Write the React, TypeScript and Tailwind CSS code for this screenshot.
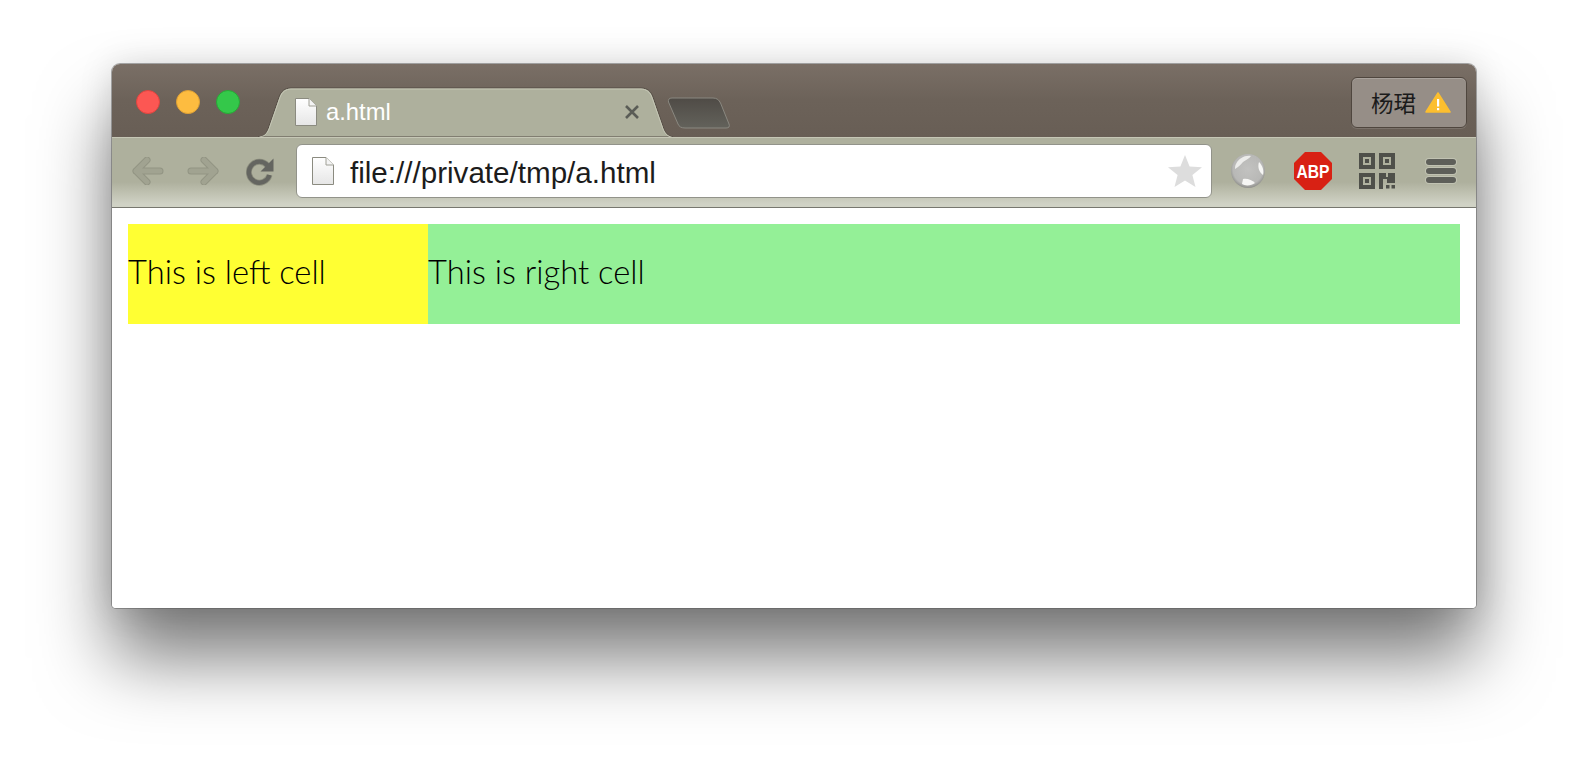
import React from "react";

function FileIcon({ w, h }: { w: number; h: number }) {
  return (
    <svg width={w} height={h} viewBox="0 0 22 28" className="shrink-0">
      <defs>
        <linearGradient id="fg" x1="0" y1="0" x2="0" y2="1">
          <stop offset="0" stopColor="#ffffff" />
          <stop offset="1" stopColor="#e6e6e6" />
        </linearGradient>
      </defs>
      <path d="M0.5 0.5H14L21.5 8V27.5H0.5Z" fill="url(#fg)" stroke="#8b8b80" />
      <path d="M14 0.5V8H21.5" fill="#f4f4f4" stroke="#a0a096" />
    </svg>
  );
}

function Arrow({ flip }: { flip?: boolean }) {
  return (
    <svg width="32" height="28" viewBox="0 0 32 28" className={flip ? "-scale-x-100" : ""}>
      <path d="M15 3L4 14L15 25M4 14H28" fill="none" stroke="#929483" strokeWidth="7" strokeLinecap="round" strokeLinejoin="round" />
      <path d="M15 3L4 14L15 25M4 14H28" fill="none" stroke="#a1a391" strokeWidth="5" strokeLinecap="round" strokeLinejoin="round" />
    </svg>
  );
}

function Reload() {
  return (
    <svg width="28" height="30" viewBox="0 0 28 30">
      <path d="M21.5 9.5A10.5 10.5 0 1 0 23.5 19" fill="none" stroke="#8c8e7e" strokeWidth="6" />
      <path d="M21.5 9.5A10.5 10.5 0 1 0 23.5 19" fill="none" stroke="#646560" strokeWidth="4.4" />
      <path d="M27.5 2.5V15.5H14.5Z" fill="#646560" />
    </svg>
  );
}

function Star() {
  return (
    <svg width="36" height="34" viewBox="0 0 36 34">
      <path d="M18 1L22.6 12.4L35 13.2L25.4 21.1L28.5 33L18 26.4L7.5 33L10.6 21.1L1 13.2L13.4 12.4Z" fill="#dddddd" />
    </svg>
  );
}

function Globe() {
  return (
    <svg width="36" height="36" viewBox="0 0 36 36">
      <defs>
        <radialGradient id="gl" cx="0.5" cy="0.45" r="0.55">
          <stop offset="0" stopColor="#c2c2c0" />
          <stop offset="0.8" stopColor="#b8b8b6" />
          <stop offset="1" stopColor="#8e8e8a" />
        </radialGradient>
      </defs>
      <circle cx="18" cy="18" r="17" fill="url(#gl)" />
      <path d="M6 11C9 5 15 2 21 3C20 5 16 7 13 9C11 11 9 14 5 16C5 14 5 13 6 11Z" fill="#ececea" />
      <path d="M29 9C33 13 34 18 33 22C30 20 27 15 29 9Z" fill="#f6f6f4" />
      <path d="M13 26C17 25 22 27 25 30C21 33 15 33 12 31Z" fill="#f6f6f4" />
    </svg>
  );
}

function Abp() {
  return (
    <svg width="40" height="40" viewBox="0 0 40 40">
      <path d="M12 1H28L39 12V28L28 39H12L1 28V12Z" fill="#d82114" />
      <text x="20" y="26.5" textAnchor="middle" fontFamily="'Liberation Sans', sans-serif" fontWeight="700" fontSize="17.5" fill="#ffffff" textLength="33" lengthAdjust="spacingAndGlyphs">ABP</text>
    </svg>
  );
}

function Qr() {
  const c = "#4f504a";
  const Finder = ({ x, y }: { x: number; y: number }) => (
    <g>
      <rect x={x + 2} y={y + 2} width="12" height="12" fill="none" stroke={c} strokeWidth="4" />
      <rect x={x + 6} y={y + 6} width="4" height="4" fill={c} />
    </g>
  );
  return (
    <svg width="36" height="36" viewBox="0 0 36 36">
      <Finder x={0} y={0} />
      <Finder x={20} y={0} />
      <Finder x={0} y={20} />
      <path d="M20 20H27V24H29V20H36V30H28V26H24V36H20Z" fill={c} />
      <rect x="27" y="32" width="3.5" height="3.5" fill={c} />
      <rect x="32.5" y="32" width="3.5" height="3.5" fill={c} />
    </svg>
  );
}

function Warning() {
  return (
    <svg width="26" height="21" viewBox="0 0 26 21">
      <path d="M13 1L25 20H1Z" fill="#fcbf2f" stroke="#fcbf2f" strokeWidth="1.5" strokeLinejoin="round" />
      <rect x="12" y="7" width="2.2" height="7.5" fill="#ffffff" />
      <rect x="12" y="16" width="2.2" height="2.2" fill="#ffffff" />
    </svg>
  );
}

function Dot({ fill, border }: { fill: string; border: string }) {
  return <span className="block w-6 h-6 rounded-full border" style={{ backgroundColor: fill, borderColor: border }} />;
}

export default function App() {
  return (
    <div className="w-[1588px] h-[768px] overflow-hidden bg-white pt-[64px] pl-[112px]" style={{ fontFamily: "'Liberation Sans', sans-serif" }}>
      <div className="w-[1364px] h-[544px] flex flex-col rounded-t-[8px] rounded-b-[4px] bg-white shadow-[0_0_0_1px_rgba(90,90,90,0.5),0_50px_72px_rgba(0,0,0,0.52),0_0_34px_rgba(0,0,0,0.13)]">
        {/* Title bar */}
        <div className="h-[73px] flex items-end rounded-t-[8px] bg-gradient-to-b from-[#7a6f66] via-[#6c6259] to-[#685e55] relative shrink-0">
          <div className="flex gap-4 pl-6 self-start pt-[26px] w-[146px] shrink-0">
            <Dot fill="#fc5753" border="#e0443e" />
            <Dot fill="#fdbc40" border="#dea034" />
            <Dot fill="#34c84a" border="#27aa35" />
          </div>
          <div className="relative w-[415px] h-[50px] shrink-0 flex items-start pl-[37px] pt-[11px]">
            <svg className="absolute inset-0" width="415" height="50" viewBox="0 0 415 50">
              <path d="M0 50C5 50 8 47 10 42L21 10C23 4 27 1 33 1H383C389 1 393 4 395 10L406 42C408 47 411 49 415 50Z" fill="#aeb09d" stroke="#554d45" strokeWidth="1" />
              <path d="M1.5 50C6 49.5 9 47 11 42L22 10.5C24 5 28 2 33 2H383C388 2 392 5 394 10.5L405 42C407 47 410 49.5 413.5 50" fill="none" stroke="#c6c7b6" strokeWidth="1" />
            </svg>
            <div className="relative flex items-center gap-[9px]">
              <FileIcon w={22} h={28} />
              <span className="text-[23.8px] leading-[28px] text-white">a.html</span>
            </div>
            <div className="absolute left-[365px] top-[16px] w-[18px] h-[18px]">
              <svg width="18" height="18" viewBox="0 0 18 18">
                <path d="M3 3L15 15M15 3L3 15" stroke="#5a5c56" strokeWidth="2.6" />
              </svg>
            </div>
          </div>
          <div className="self-start mt-[33px] -ml-[6px]">
            <svg width="64" height="32" viewBox="0 0 64 32">
              <defs>
                <linearGradient id="nt" x1="0" y1="0" x2="0" y2="1">
                  <stop offset="0" stopColor="#4f4b46" />
                  <stop offset="1" stopColor="#63625b" />
                </linearGradient>
              </defs>
              <path d="M1.5 5C1 2.5 2 1 5 1H46C50 1 52 3 53.5 6L62 27C63 29.5 62 31 59 31H18C14 31 12 29.5 11 27Z" fill="url(#nt)" stroke="#8a8880" strokeWidth="1" />
            </svg>
          </div>
          <div className="ml-auto mr-[9px] self-start mt-[13px] w-[116px] h-[51px] rounded-[6px] bg-[#968e87] border border-[#4f463e] shadow-[inset_0_1px_0_rgba(255,255,255,0.18),0_1px_0_rgba(255,255,255,0.12)] flex items-center pl-[19px] gap-[9px]">
            <span className="text-[22.5px] leading-none text-[#1b1b1b] whitespace-nowrap" style={{ fontFamily: "'Noto Sans CJK SC', sans-serif" }}>杨珺</span>
            <Warning />
          </div>
        </div>
        {/* Toolbar */}
        <div className="h-[71px] flex items-start bg-[linear-gradient(to_bottom,#aeb09d_0,#aeb09d_44px,#d0d2c5_66px,#d0d2c5_71px)] border-t border-[#c6c7b6] border-b border-b-[#77776f] shrink-0 relative">
          <div className="flex items-center mt-[18px] ml-[20px] w-[164px] shrink-0">
            <Arrow />
            <span className="w-[23px]" />
            <Arrow flip />
            <span className="w-[27px]" />
            <Reload />
          </div>
          <div className="mt-[6px] w-[916px] h-[54px] rounded-[6px] bg-white border border-[#92938a] flex items-center pl-[15px] pr-[8px] shrink-0">
            <FileIcon w={22} h={30} />
            <span className="ml-[16px] mt-[3px] text-[29.6px] leading-none text-[#1c1c1c] whitespace-nowrap">file:///private/tmp/a.html</span>
            <span className="ml-auto flex"><Star /></span>
          </div>
          <div className="flex items-center mt-[13px] ml-[18px]">
            <Globe />
            <span className="w-[27px]" />
            <Abp />
            <span className="w-[26px]" />
            <Qr />
            <span className="w-[31px]" />
            <div className="flex flex-col gap-[3px] w-[30px]">
              <span className="h-[6px] rounded-full bg-[#5e5f59] shadow-[0_0_0_1px_rgba(205,206,192,0.6)]" />
              <span className="h-[6px] rounded-full bg-[#5e5f59] shadow-[0_0_0_1px_rgba(205,206,192,0.6)]" />
              <span className="h-[6px] rounded-full bg-[#5e5f59] shadow-[0_0_0_1px_rgba(205,206,192,0.6)]" />
            </div>
          </div>
        </div>
        {/* Content */}
        <div className="flex-1 px-4 pt-[16px] rounded-b-[4px] bg-white">
          <div className="flex h-[100px] text-[32.7px] font-light text-black" style={{ fontFamily: "Lato, sans-serif" }}>
            <div className="w-[300px] bg-[#ffff33] flex items-center pb-[5px]">This is left cell</div>
            <div className="flex-1 bg-[#94f097] flex items-center pb-[5px]">This is right cell</div>
          </div>
        </div>
      </div>
    </div>
  );
}
